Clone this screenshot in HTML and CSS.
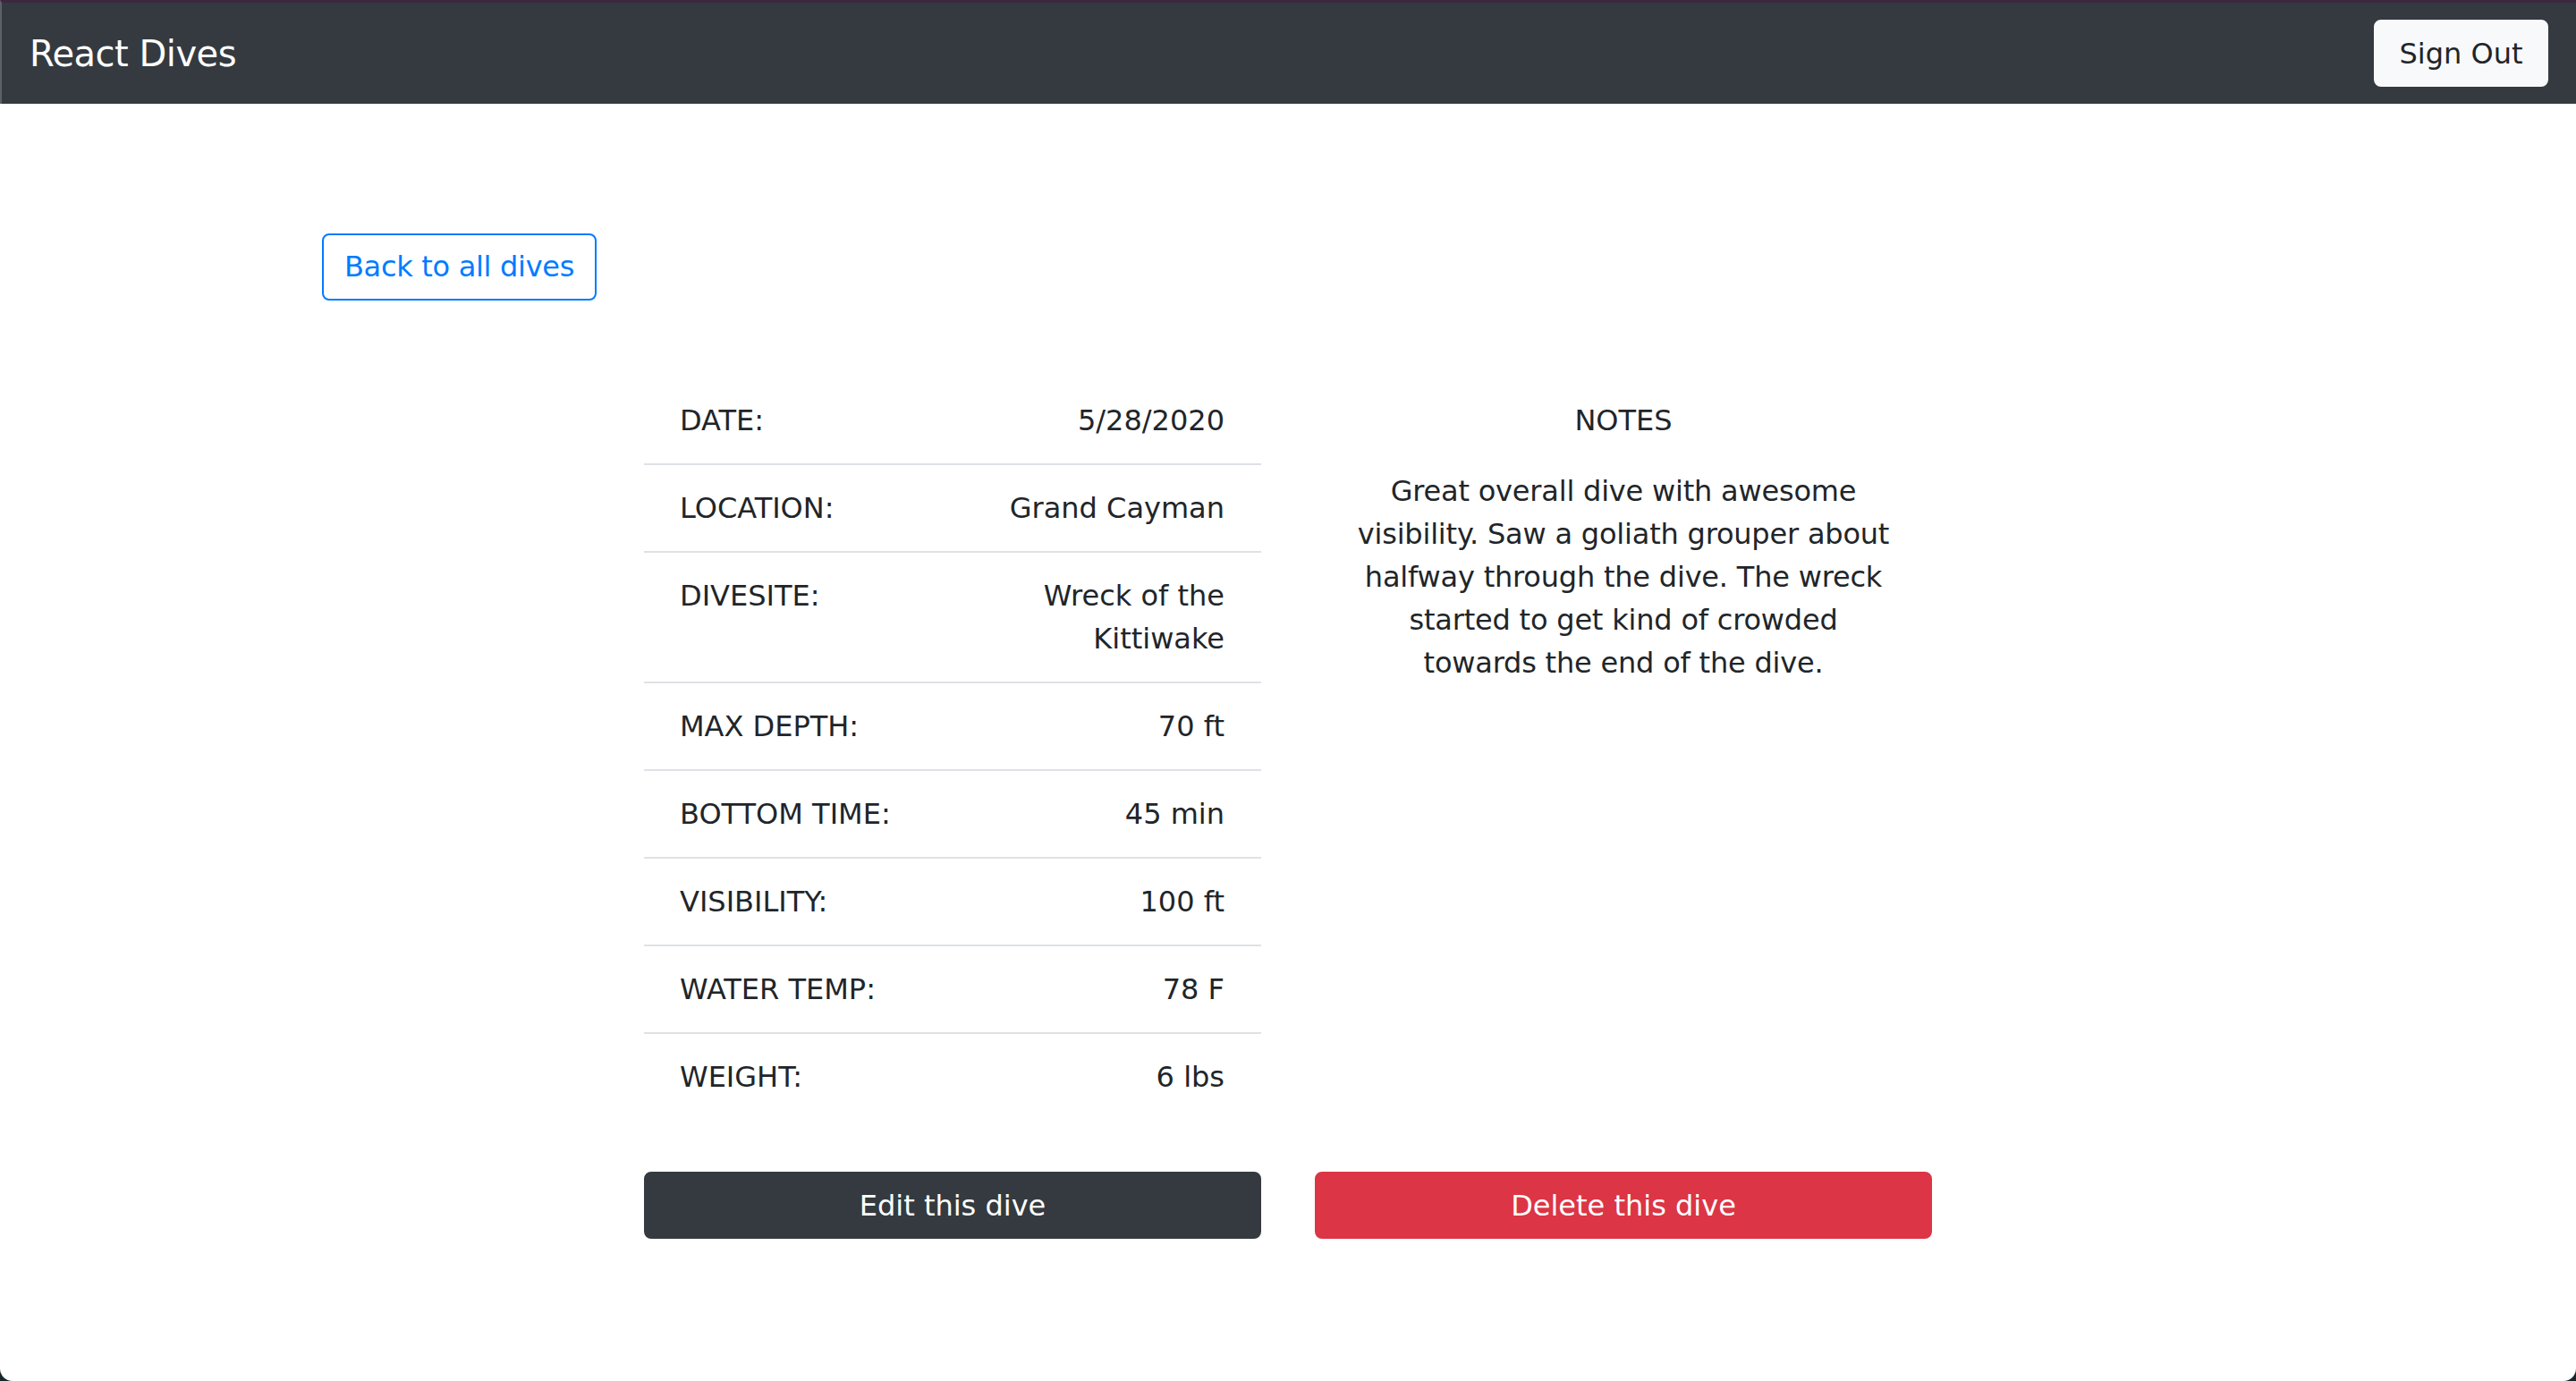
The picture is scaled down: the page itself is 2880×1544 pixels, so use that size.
FILE: index.html
```html
<!DOCTYPE html>
<html lang="en">
<head>
<meta charset="utf-8">
<title>React Dives</title>
<link rel="stylesheet" href="styles.css">
</head>
<body>
<div class="page">
  <nav class="navbar">
    <span class="brand">React Dives</span>
    <button class="btn btn-light">Sign Out</button>
  </nav>
  <main class="container">
    <button class="btn btn-outline">Back to all dives</button>
    <section class="detail">
      <table class="dive-table">
        <tbody>
          <tr><td class="label">DATE:</td><td class="value">5/28/2020</td></tr>
          <tr><td class="label">LOCATION:</td><td class="value">Grand Cayman</td></tr>
          <tr><td class="label">DIVESITE:</td><td class="value">Wreck of the Kittiwake</td></tr>
          <tr><td class="label">MAX DEPTH:</td><td class="value">70 ft</td></tr>
          <tr><td class="label">BOTTOM TIME:</td><td class="value">45 min</td></tr>
          <tr><td class="label">VISIBILITY:</td><td class="value">100 ft</td></tr>
          <tr><td class="label">WATER TEMP:</td><td class="value">78 F</td></tr>
          <tr><td class="label">WEIGHT:</td><td class="value">6 lbs</td></tr>
        </tbody>
      </table>
      <div class="notes">
        <h2 class="notes-title">NOTES</h2>
        <p class="notes-text">Great overall dive with awesome<br>visibility. Saw a goliath grouper about<br>halfway through the dive. The wreck<br>started to get kind of crowded<br>towards the end of the dive.</p>
      </div>
      <button class="btn btn-dark">Edit this dive</button>
      <button class="btn btn-danger">Delete this dive</button>
    </section>
  </main>
</div>
</body>
</html>
```
FILE: styles.css
```css
html {
  background: #17252d;
}
body {
  margin: 0;
  font-family: "DejaVu Sans", "Liberation Sans", sans-serif;
  font-size: 32px;
  line-height: 48px;
  color: #212529;
}
.page {
  background: #ffffff;
  height: 1544px;
  border-radius: 0 0 14px 14px;
  overflow: hidden;
}
.navbar {
  height: 113px;
  background: #343a40;
  border-top: 3px solid #3d2740;
  border-left: 2px solid #5c6167;
  display: flex;
  align-items: center;
  justify-content: space-between;
  padding: 0 31px 0 31px;
}
.brand {
  color: #ffffff;
  font-size: 40px;
  line-height: 60px;
  letter-spacing: -0.5px;
}
.btn {
  font-family: inherit;
  font-size: 32px;
  line-height: 48px;
  height: 75px;
  border-radius: 8px;
  border: 2px solid transparent;
  padding: 0 24px;
  cursor: pointer;
}
.btn-light {
  background: #f8f9fa;
  color: #212529;
  border-color: #f8f9fa;
  width: 195px;
  padding: 0;
}
.container {
  width: 2160px;
  margin: 0 auto;
  padding-top: 145px;
}
.btn-outline {
  background: #ffffff;
  color: #007bff;
  border-color: #007bff;
  width: 307px;
  padding: 0 0 2px;
  letter-spacing: -0.3px;
}
.detail {
  width: 1440px;
  margin: 86px auto 0;
  display: grid;
  grid-template-columns: 690px 690px;
  column-gap: 60px;
  row-gap: 58px;
}
.dive-table {
  width: 100%;
  border-collapse: collapse;
  table-layout: fixed;
}
.dive-table td {
  padding: 24px 41px 24px 40px;
  border-top: 2px solid #dee2e6;
  vertical-align: top;
}
.dive-table tr:first-child td {
  border-top: none;
}
.label {
  text-align: left;
  white-space: nowrap;
}
.value {
  text-align: right;
}
.notes {
  padding-top: 24px;
  text-align: center;
}
.notes-title {
  margin: 0 0 31px;
  font-size: 32px;
  line-height: 48px;
  font-weight: 400;
}
.notes-text {
  margin: 0;
  white-space: nowrap;
  letter-spacing: -0.2px;
}
.btn-dark {
  background: #343a40;
  border-color: #343a40;
  color: #ffffff;
  width: 100%;
}
.btn-danger {
  background: #dc3545;
  border-color: #dc3545;
  color: #ffffff;
  width: 100%;
}
```
